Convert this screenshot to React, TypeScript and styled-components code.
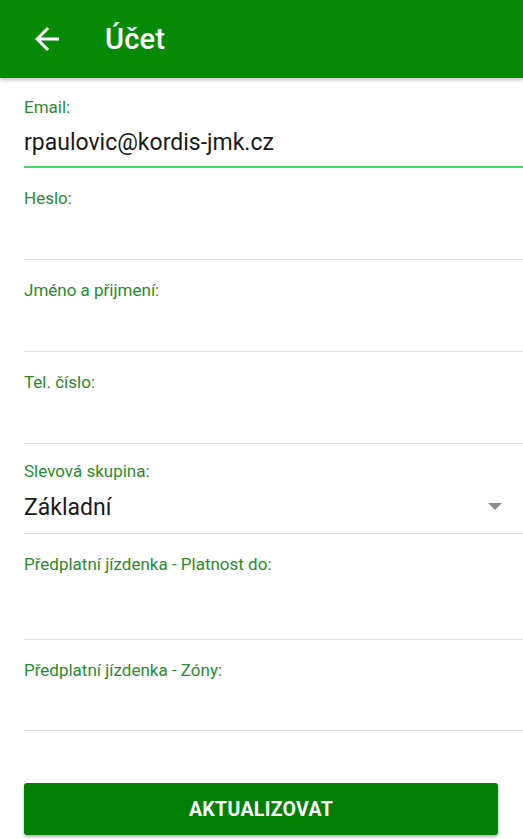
import styled, { createGlobalStyle } from 'styled-components';

const GlobalStyle = createGlobalStyle`
  html, body {
    margin: 0;
    padding: 0;
    background: #ffffff;
  }
  body {
    font-family: Roboto, "Noto Sans", sans-serif;
  }
`;

const Screen = styled.div`
  width: 523px;
  height: 839px;
  overflow: hidden;
  background: #ffffff;
  display: flex;
  flex-direction: column;
`;

const AppBar = styled.header`
  height: 78px;
  flex-shrink: 0;
  background: #078b07;
  display: flex;
  align-items: center;
  padding-left: 29px;
  gap: 40px;
  box-shadow: 0 2px 4px rgba(0, 0, 0, 0.25);
  position: relative;
  z-index: 1;
`;

const BackButton = styled.button`
  border: 0;
  background: transparent;
  padding: 0;
  width: 36px;
  height: 36px;
  display: flex;
  align-items: center;
  justify-content: center;
  color: #ffffff;
`;

const Title = styled.h1`
  margin: 0;
  color: #ffffff;
  font-size: 29px;
  font-weight: 500;
  letter-spacing: 0.2px;
`;

const Form = styled.div`
  display: flex;
  flex-direction: column;
  padding-left: 24px;
`;

const Field = styled.div<{ $focused?: boolean; $top?: number }>`
  padding-top: ${(p) => p.$top ?? 21}px;
  border-bottom: ${(p) => (p.$focused ? '2px solid #45d46e' : '1px solid #e2e2e2')};
  display: flex;
  flex-direction: column;
`;

const Label = styled.label`
  font-size: 17px;
  line-height: 18px;
  color: #2a8c2a;
`;

const ValueRow = styled.div<{ $area?: number }>`
  height: ${(p) => p.$area ?? 52}px;
  display: flex;
  align-items: center;
  justify-content: space-between;
  padding-right: 21px;
`;

const Value = styled.span`
  font-size: 23px;
  color: #1a1a1a;
  margin-top: 2px;
`;

const Caret = styled.span`
  width: 0;
  height: 0;
  border-left: 7px solid transparent;
  border-right: 7px solid transparent;
  border-top: 7px solid #8c8c8c;
`;

const ButtonWrap = styled.div`
  padding: 52px 25px 0 24px;
`;

const PrimaryButton = styled.button`
  width: 100%;
  height: 52px;
  border: 0;
  border-radius: 3px;
  background: #017f01;
  color: #ffffff;
  font-family: Roboto, "Noto Sans", sans-serif;
  font-size: 19.5px;
  font-weight: 700;
  letter-spacing: 0.3px;
  box-shadow: 0 2px 3px rgba(0, 0, 0, 0.3);
`;

const ArrowBack = () => (
  <svg width="36" height="36" viewBox="0 0 24 24" fill="currentColor">
    <path d="M20 11H7.83l5.59-5.59L12 4l-8 8 8 8 1.41-1.41L7.83 13H20v-2z" />
  </svg>
);

const fields = [
  { label: 'Heslo:' },
  { label: 'Jméno a přijmení:' },
  { label: 'Tel. číslo:' },
];

export default function App() {
  return (
    <Screen>
      <GlobalStyle />
      <AppBar>
        <BackButton aria-label="Zpět">
          <ArrowBack />
        </BackButton>
        <Title>Účet</Title>
      </AppBar>
      <Form>
        <Field $focused $top={20}>
          <Label>Email:</Label>
          <ValueRow $area={50}>
            <Value>rpaulovic@kordis-jmk.cz</Value>
          </ValueRow>
        </Field>
        {fields.map((f) => (
          <Field key={f.label}>
            <Label>{f.label}</Label>
            <ValueRow />
          </Field>
        ))}
        <Field $top={18}>
          <Label>Slevová skupina:</Label>
          <ValueRow $area={53}>
            <Value>Základní</Value>
            <Caret />
          </ValueRow>
        </Field>
        <Field>
          <Label>Předplatní jízdenka - Platnost do:</Label>
          <ValueRow $area={66} />
        </Field>
        <Field>
          <Label>Předplatní jízdenka - Zóny:</Label>
          <ValueRow $area={51} />
        </Field>
      </Form>
      <ButtonWrap>
        <PrimaryButton>AKTUALIZOVAT</PrimaryButton>
      </ButtonWrap>
    </Screen>
  );
}
